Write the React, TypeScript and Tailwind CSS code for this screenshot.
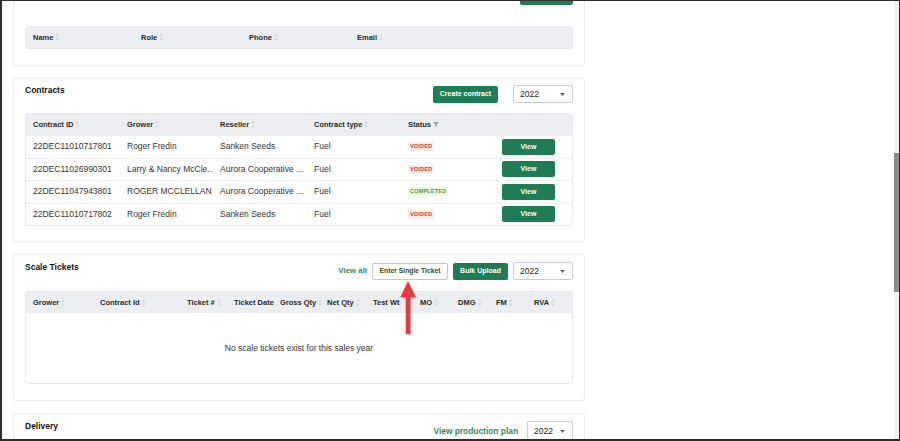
import React from 'react';

const contracts = [
  { id: '22DEC11010717801', grower: 'Roger Fredin', reseller: 'Sanken Seeds', type: 'Fuel', status: 'VOIDED' },
  { id: '22DEC11026990301', grower: 'Larry & Nancy McCle...', reseller: 'Aurora Cooperative ...', type: 'Fuel', status: 'VOIDED' },
  { id: '22DEC11047943801', grower: 'ROGER MCCLELLAN', reseller: 'Aurora Cooperative ...', type: 'Fuel', status: 'COMPLETED' },
  { id: '22DEC11010717802', grower: 'Roger Fredin', reseller: 'Sanken Seeds', type: 'Fuel', status: 'VOIDED' },
];

const ticketCols = [
  { label: 'Grower', w: 'w-[67px]' },
  { label: 'Contract Id', w: 'w-[87px]' },
  { label: 'Ticket #', w: 'w-[47px]' },
  { label: 'Ticket Date', w: 'w-[46px]', noSort: true },
  { label: 'Gross Qty', w: 'w-[47px]' },
  { label: 'Net Qty', w: 'w-[46px]' },
  { label: 'Test Wt', w: 'w-[47px]', noSort: true },
  { label: 'MO', w: 'w-[38px]' },
  { label: 'DMG', w: 'w-[38px]' },
  { label: 'FM', w: 'w-[38px]' },
  { label: 'RVA', w: 'w-[44px]' },
];

function SortIcon() {
  return (
    <svg width="4" height="7" viewBox="0 0 4 7" className="shrink-0">
      <path d="M2 0 L4 2.6 L0 2.6 Z" fill="#d3d6da" />
      <path d="M0 4.4 L4 4.4 L2 7 Z" fill="#d3d6da" />
    </svg>
  );
}

function FilterIcon() {
  return (
    <svg width="6" height="5" viewBox="0 0 6 5" className="shrink-0">
      <path d="M0 0 H6 L3.7 2.6 V5 L2.3 4.2 V2.6 Z" fill="#9a9ca0" />
    </svg>
  );
}

function Caret() {
  return (
    <svg width="5" height="3" viewBox="0 0 5 3">
      <path d="M0 0 H5 L2.5 3 Z" fill="#666" />
    </svg>
  );
}

function YearSelect({ className }: { className: string }) {
  return (
    <div className={`flex items-center justify-between border border-[#c9ccd0] rounded-[2px] bg-white pl-[6px] pr-[7px] text-[8.5px] text-[#222] ${className}`}>
      <span>2022</span>
      <Caret />
    </div>
  );
}

function GreenButton({ children, className }: { children?: React.ReactNode; className: string }) {
  return (
    <button className={`flex items-center justify-center bg-[#1f7d55] rounded-[2px] text-white text-[7px] font-bold ${className}`}>
      {children}
    </button>
  );
}

function Th({ label, className = '', sort = true, filter = false }: { label: string; className?: string; sort?: boolean; filter?: boolean }) {
  return (
    <div className={`flex items-center gap-[2px] pl-[7px] text-[7.5px] font-bold text-[#2a2a2a] whitespace-nowrap ${className}`}>
      <span>{label}</span>
      {filter ? <FilterIcon /> : sort ? <SortIcon /> : null}
    </div>
  );
}

function Card({ children, className = '' }: { children: React.ReactNode; className?: string }) {
  return (
    <section className={`w-[572px] shrink-0 border border-[#ebecee] rounded-[3px] bg-white px-[11px] ${className}`}>
      {children}
    </section>
  );
}

function Title({ children }: { children: React.ReactNode }) {
  return <h2 className="text-[8.5px] leading-[10px] font-bold text-[#111]">{children}</h2>;
}

function Badge({ status }: { status: string }) {
  const done = status === 'COMPLETED';
  return (
    <span
      className={`px-[2px] py-[1px] text-[5.5px] leading-[7px] font-bold tracking-[0.2px] ${
        done ? 'bg-[#eefae6] text-[#4f9a2b]' : 'bg-[#fdeceb] text-[#c2413c]'
      }`}
    >
      {status}
    </span>
  );
}

export default function App() {
  return (
    <div className="relative flex w-[900px] h-[441px] overflow-hidden bg-white border-l-2 border-t border-r border-b-2 border-[#2f2f2f] font-['Liberation_Sans',Arial,sans-serif]">
      <div className="flex-1 overflow-hidden">
        <div className="flex flex-col gap-[12px] pl-[11px]">
          {/* Contacts (scrolled past its top) */}
          <Card className="-mt-[21px] pt-[7px] pb-[16px]">
            <div className="flex justify-end h-[17px]">
              <GreenButton className="w-[53px] h-[17px]" />
            </div>
            <div className="mt-[21px] border border-[#e6e8eb] rounded-[3px] overflow-hidden">
              <div className="flex h-[21px] bg-[#eceef1]">
                <Th label="Name" className="w-[108px]" />
                <Th label="Role" className="w-[108px]" />
                <Th label="Phone" className="w-[108px]" />
                <Th label="Email" className="w-[108px]" />
              </div>
            </div>
          </Card>

          {/* Contracts */}
          <Card className="pt-[6px] pb-[15px]">
            <div className="flex items-start justify-between h-[17px]">
              <Title>Contracts</Title>
              <div className="flex items-center gap-[15px]">
                <GreenButton className="w-[65px] h-[17px]">Create contract</GreenButton>
                <YearSelect className="w-[60px] h-[18px]" />
              </div>
            </div>
            <div className="mt-[11px] border border-[#e6e8eb] rounded-[3px] overflow-hidden">
              <div className="flex h-[21px] bg-[#eceef1]">
                <Th label="Contract ID" className="w-[94px]" />
                <Th label="Grower" className="w-[93px]" />
                <Th label="Reseller" className="w-[94px]" />
                <Th label="Contract type" className="w-[94px]" />
                <Th label="Status" className="w-[94px]" filter />
              </div>
              {contracts.map((c) => (
                <div key={c.id} className="flex items-center h-[22.5px] border-t border-[#eceef0] text-[8.5px] text-[#333] whitespace-nowrap">
                  <div className="w-[94px] pl-[7px]">{c.id}</div>
                  <div className="w-[93px] pl-[7px] overflow-hidden">{c.grower}</div>
                  <div className="w-[94px] pl-[7px] overflow-hidden">{c.reseller}</div>
                  <div className="w-[94px] pl-[7px]">{c.type}</div>
                  <div className="w-[94px] pl-[7px] flex">
                    <Badge status={c.status} />
                  </div>
                  <div className="pl-[7px]">
                    <GreenButton className="w-[53px] h-[16px]">View</GreenButton>
                  </div>
                </div>
              ))}
            </div>
          </Card>

          {/* Scale tickets */}
          <Card className="pt-[7px] pb-[16px]">
            <div className="flex items-start justify-between h-[17px]">
              <Title>Scale Tickets</Title>
              <div className="flex items-center gap-[5px]">
                <span className="text-[7.8px] font-bold text-[#2e8a5c]">View all</span>
                <button className="w-[76px] h-[17px] border border-[#c4c7cb] rounded-[2px] bg-white text-[6.8px] font-bold text-[#33501f]">
                  Enter Single Ticket
                </button>
                <GreenButton className="w-[55px] h-[17px]">Bulk Upload</GreenButton>
                <YearSelect className="w-[60px] h-[18px]" />
              </div>
            </div>
            <div className="mt-[12px] border border-[#e6e8eb] rounded-[3px] overflow-hidden">
              <div className="flex h-[21px] bg-[#eceef1]">
                {ticketCols.map((col) => (
                  <Th key={col.label} label={col.label} className={col.w} sort={!col.noSort} />
                ))}
              </div>
              <div className="h-[70px] flex items-center justify-center text-[8.5px] text-[#333]">
                No scale tickets exist for this sales year
              </div>
            </div>
          </Card>

          {/* Delivery */}
          <Card className="pt-[7px] pb-[16px]">
            <div className="flex items-start justify-between">
              <Title>Delivery</Title>
              <div className="flex items-center gap-[9px]">
                <span className="text-[8.4px] font-bold text-[#2e8a5c]">View production plan</span>
                <YearSelect className="w-[46px] h-[21px]" />
              </div>
            </div>
          </Card>
        </div>
      </div>

      {/* scrollbar */}
      <div className="w-[5px] shrink-0 bg-[#f1f1f1] flex flex-col">
        <div className="mt-[152px] h-[139px] bg-[#8b8b8b]" />
      </div>

      {/* annotation arrow */}
      <svg
        className="absolute left-[396px] top-[278px] drop-shadow-[1px_1px_1px_rgba(0,0,0,0.35)]"
        width="22"
        height="60"
        viewBox="0 0 22 60"
      >
        <path d="M10 2 L17.5 18 L12.2 18 L12.2 55 L7.8 55 L7.8 18 L2.5 18 Z" fill="#e8393e" />
      </svg>
    </div>
  );
}
